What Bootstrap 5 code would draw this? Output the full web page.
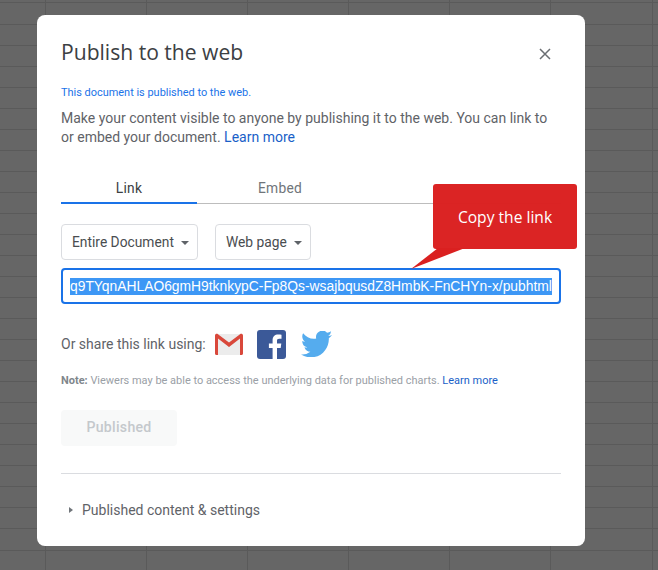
<!DOCTYPE html>
<html lang="en">
<head>
<meta charset="utf-8">
<title>Publish to the web</title>
<link href="https://cdn.jsdelivr.net/npm/bootstrap@5.3.0/dist/css/bootstrap.min.css" rel="stylesheet">
<style>
html,body{height:100%;}
body{margin:0;overflow:hidden;font-family:Roboto,sans-serif;font-size:14px;color:#5f6368;
  background-color:#666;
  background-image:
    linear-gradient(#5a5a5a,#5a5a5a),
    repeating-linear-gradient(to bottom,#5a5a5a 0 1px,transparent 1px 21.02px),
    repeating-linear-gradient(to right,#5a5a5a 0 1px,transparent 1px 101.1px);
  background-size:100% 1px,100% 100%,100% 100%;
  background-position:0 2px,0 24px,45px 0;
  background-repeat:no-repeat,no-repeat,no-repeat;}
.pub-dialog{position:relative;width:548px;height:531px;margin:15px 0 0 37px;background:#fff;border-radius:8px;padding:23px 24px 0;}
.pub-title{font-family:"Open Sans",sans-serif;font-size:21.1px;font-weight:400;line-height:28px;color:#3c4043;margin:0;}
.pub-close{position:absolute;top:32px;right:33px;width:14px;height:14px;padding:0;border:0;background:none;line-height:0;}
.pub-status{font-size:10.95px;line-height:14px;color:#1a73e8;margin:20px 0 0;}
.pub-intro{font-size:14px;line-height:19px;margin:9px 0 0;}
.pub-link{color:#1a5fc8;text-decoration:none;}
.pub-tabs{height:31px;margin-top:26px;border-bottom:1px solid #bdbdbd;gap:15px;}
.pub-tab{width:136px;height:31px;font-size:13.8px;line-height:31px;text-align:center;color:#70757a;letter-spacing:.25px;}
.pub-tab-on{color:#3c4043;border-bottom:2px solid #1a73e8;}
.pub-selects{gap:17px;margin-top:20px;}
.pub-select{height:36px;border:1px solid #dadce0;border-radius:4px;padding:0 8px 0 10px;font-size:13.8px;line-height:34px;color:#4a4d50;background:#fff;}
.pub-caret{display:inline-block;width:0;height:0;border:4px solid transparent;border-top-color:#5f6368;border-bottom:0;margin-left:7px;vertical-align:2px;}
.pub-url{height:36px;margin-top:8px;border:2px solid #1a73e8;border-radius:4px;padding:0 7px;font-family:"Liberation Sans",Arial,sans-serif;font-size:13.85px;line-height:32px;white-space:nowrap;overflow:hidden;}
.pub-url span{background:#3d97f5;color:#fff;display:inline-block;line-height:17px;}
.pub-share{margin-top:25px;height:30px;font-size:14px;}
.pub-icon-gap{margin-left:13px;}
.pub-icon-gap2{margin-left:15px;}
.pub-note{font-size:10.98px;line-height:14px;color:#9aa0a6;margin:15px 0 0;}
.pub-note b{color:#80868b;font-weight:700;}
.pub-note a{color:#1a5fc8;text-decoration:none;}
.pub-btn{width:116px;height:36px;margin-top:22px;background:#f8f9f9;border:0;border-radius:4px;font-size:14.1px;font-weight:500;color:#c4c8cc;letter-spacing:.3px;padding:0;}
.pub-rule{height:1px;background:#dadce0;margin:27px 0 0;}
.pub-more{margin-top:26px;font-size:14px;line-height:20px;color:#5f6368;}
.pub-tri{display:inline-block;width:0;height:0;border-style:solid;border-width:3.5px 0 3.5px 4px;border-color:transparent transparent transparent #70757a;margin:0 9px 0 8px;}
.pub-callout{position:absolute;left:396px;top:169px;width:144px;height:65px;background:rgba(218,32,32,.98);border-radius:3px;color:#fff;font-family:"Open Sans",sans-serif;font-size:15.6px;text-align:center;line-height:66px;}
.pub-tail{position:absolute;left:374px;top:233px;width:56px;height:22px;overflow:visible;}
</style>
</head>
<body>
<div class="pub-dialog">
  <h1 class="pub-title">Publish to the web</h1>
  <button class="pub-close" aria-label="Close" type="button">
    <svg width="14" height="14" viewBox="0 0 14 14"><path d="M2 2l10 10M12 2L2 12" stroke="#6a6e72" stroke-width="1.5" fill="none"/></svg>
  </button>
  <p class="pub-status">This document is published to the web.</p>
  <p class="pub-intro">Make your content visible to anyone by publishing it to the web. You can link to or embed your document. <a class="pub-link" href="#">Learn more</a></p>
  <div class="pub-tabs d-flex">
    <div class="pub-tab pub-tab-on">Link</div>
    <div class="pub-tab">Embed</div>
  </div>
  <div class="pub-selects d-flex">
    <div class="pub-select">Entire Document<span class="pub-caret"></span></div>
    <div class="pub-select">Web page<span class="pub-caret"></span></div>
  </div>
  <div class="pub-url"><span>q9TYqnAHLAO6gmH9tknkypC-Fp8Qs-wsajbqusdZ8HmbK-FnCHYn-x/pubhtml</span></div>
  <div class="pub-share d-flex align-items-center">
    <span>Or share this link using:</span>
    <svg class="ms-2" width="30" height="24" viewBox="0 0 30 24">
      <rect x="1" y="2" width="28" height="21" rx="1.5" fill="#ececec"/>
      <path d="M4 3l11 9 11-9v3L15 15 4 6z" fill="#dcdcdc"/>
      <path d="M1 3.5C1 2 2.800 1.300 4 2.200L15 10.500 26 2.200C27.200 1.300 29 2 29 3.500V21.500C29 22.300 28.300 23 27.500 23H26V6.500L15 15 4 6.500V23H2.500C1.700 23 1 22.300 1 21.500Z" fill="#d9483b"/>
    </svg>
    <svg class="pub-icon-gap" width="29" height="29" viewBox="0 0 29 29">
      <rect width="29" height="29" rx="3" fill="#3b5998"/>
      <path d="M20 29V18h3.700l.6-4.400H20v-2.800c0-1.300.4-2.100 2.200-2.100h2.300V4.800c-.4-.1-1.800-.2-3.300-.2-3.300 0-5.600 2-5.600 5.700v3.300h-3.700V18h3.700v11z" fill="#fff"/>
    </svg>
    <svg class="pub-icon-gap2" width="31" height="26" viewBox="0 1.500 24 20" preserveAspectRatio="none">
      <path d="M23.953 4.570a10 10 0 01-2.825.775 4.958 4.958 0 002.163-3.723c-.951.555-2.005.959-3.127 1.184a4.920 4.920 0 00-8.384 4.482C7.690 8.095 4.067 6.130 1.640 3.162a4.822 4.822 0 00-.666 2.475c0 1.710.870 3.213 2.188 4.096a4.904 4.904 0 01-2.228-.616v.060a4.923 4.923 0 003.946 4.827 4.996 4.996 0 01-2.212.085 4.936 4.936 0 004.604 3.417 9.867 9.867 0 01-6.102 2.105c-.390 0-.779-.023-1.170-.067a13.995 13.995 0 007.557 2.209c9.053 0 13.998-7.496 13.998-13.985 0-.210 0-.420-.015-.630A9.935 9.935 0 0024 4.590z" fill="#55acee"/>
    </svg>
  </div>
  <p class="pub-note"><b>Note:</b> Viewers may be able to access the underlying data for published charts. <a href="#">Learn more</a></p>
  <button class="pub-btn d-block" type="button" disabled>Published</button>
  <div class="pub-rule"></div>
  <div class="pub-more d-flex align-items-center"><span class="pub-tri"></span>Published content &amp; settings</div>

  <div class="pub-callout">Copy the link</div>
  <svg class="pub-tail" viewBox="0 0 56 22"><path d="M0 21L27 0H54z" fill="#da2020"/></svg>
</div>
<script src="https://cdn.jsdelivr.net/npm/bootstrap@5.3.0/dist/js/bootstrap.bundle.min.js"></script>
</body>
</html>
